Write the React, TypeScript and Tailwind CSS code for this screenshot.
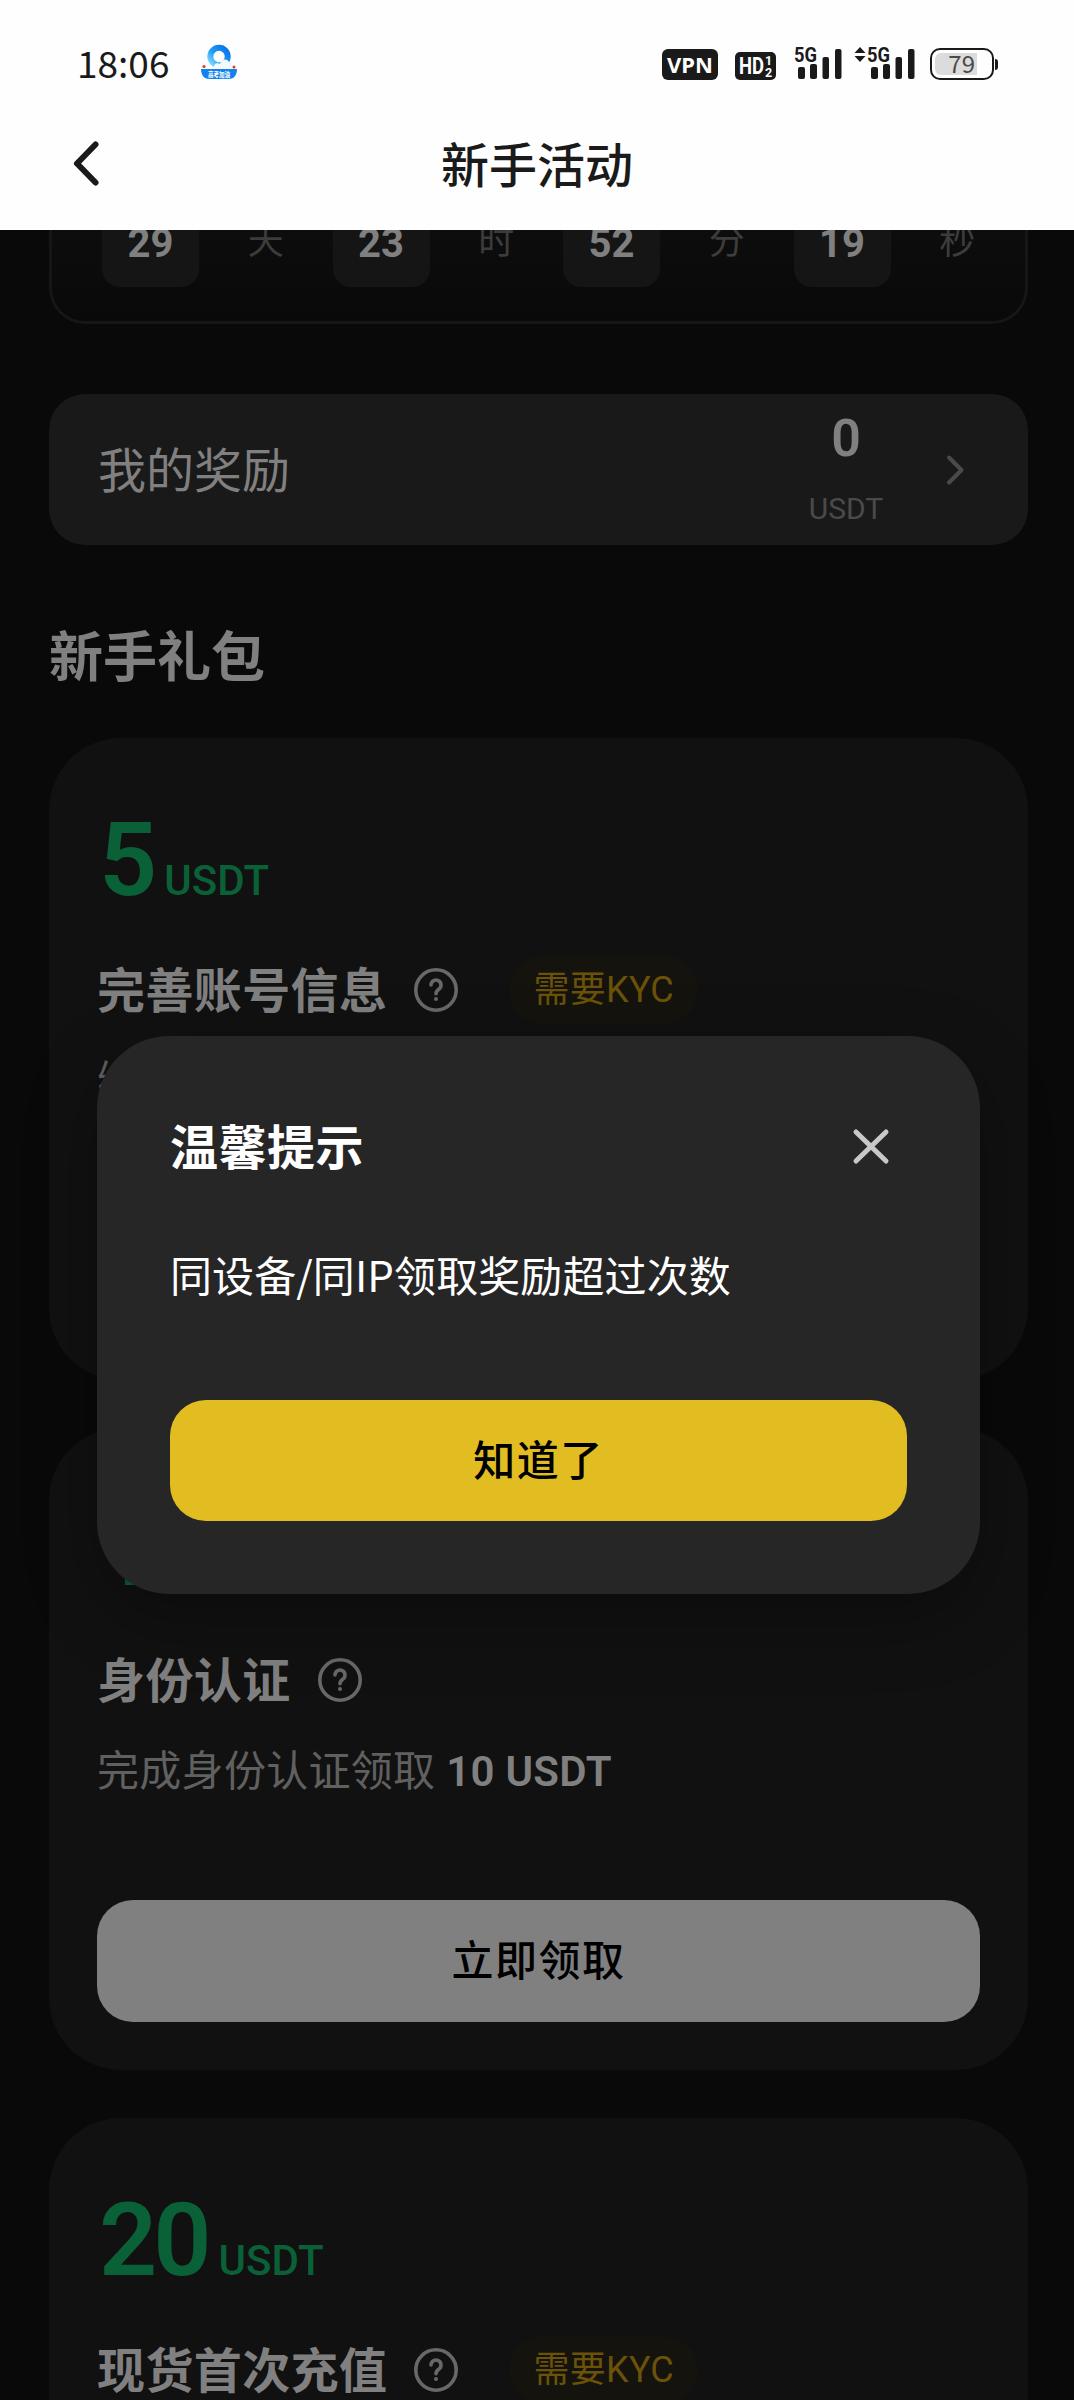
import { ReactNode } from "react";

type Gift = {
  amount: number;
  title: string;
  needKyc: boolean;
  desc: string;
  action: string;
};

const countdown = [
  { value: "29", unit: "天" },
  { value: "23", unit: "时" },
  { value: "52", unit: "分" },
  { value: "19", unit: "秒" },
];

const gifts: Gift[] = [
  { amount: 5, title: "完善账号信息", needKyc: true, desc: "绑定手机和邮箱领取", action: "立即领取" },
  { amount: 10, title: "身份认证", needKyc: false, desc: "完成身份认证领取", action: "立即领取" },
  { amount: 20, title: "现货首次充值", needKyc: true, desc: "完成首次充值领取", action: "立即领取" },
];

export default function App() {
  return (
    <div className="relative h-[2400px] w-[1074px] overflow-hidden bg-[#090909] font-['Roboto','Noto_Sans_CJK_SC',sans-serif] text-[#808080]">
      <header className="relative z-10 h-[230px] bg-[#fefefe] text-[#1a1a1a]">
        <StatusBar />
        <NavBar title="新手活动" />
      </header>

      <main className="-mt-6 pr-[46px] pl-[49px]">
        <Countdown />
        <RewardBar />
        <h2 className="mt-[75px] text-[54px] leading-[78px] font-bold">新手礼包</h2>
        <div className="mt-[40px] flex flex-col gap-12">
          {gifts.map((gift) => (
            <GiftCard key={gift.title} gift={gift} />
          ))}
        </div>
      </main>

      <TipDialog title="温馨提示" confirmText="知道了">
        同设备/同IP领取奖励超过次数
      </TipDialog>
    </div>
  );
}

function StatusBar() {
  return (
    <div className="flex h-[96px] items-end justify-between pr-[76px] pb-[16px] pl-[77px]">
      <div className="flex items-center">
        <span className="font-['Noto_Sans_CJK_SC',sans-serif] text-[37px] leading-[34px]">18:06</span>
        <BrowserLogo />
      </div>
      <div className="flex items-end">
        <span className="flex h-[31px] w-[56px] items-center justify-center rounded-md bg-[#1a1a1a] pb-[2px] font-['Noto_Sans',sans-serif] text-[22px] leading-none font-bold text-white">
          VPN
        </span>
        <HdBadge />
        <Signal className="ml-[18px]" />
        <svg className="mb-[18px] ml-[12px] h-[15px] w-[12px]" viewBox="0 0 12 15" fill="#1a1a1a">
          <path d="M6 0l5.5 6H.5zM6 15L.5 9h11z" />
        </svg>
        <Signal className="ml-px" />
        <Battery level={79} />
      </div>
    </div>
  );
}

function BrowserLogo() {
  return (
    <svg className="ml-[31px] h-[36px] w-[38px] overflow-visible" viewBox="0 0 38 36">
      <defs>
        <linearGradient id="ring" x1="0" y1="1" x2="1" y2="0">
          <stop offset="0" stopColor="#8fdcfb" />
          <stop offset="0.45" stopColor="#1f9cf5" />
          <stop offset="1" stopColor="#0b6fe8" />
        </linearGradient>
      </defs>
      <circle cx="19" cy="12.5" r="8.7" fill="none" stroke="url(#ring)" strokeWidth="6" />
      <path d="M14 25c-1-5 3-7 6-5 1-5 7-6 9-2 4-1 5 4 4 7z" fill="#f4f7fb" />
      <circle cx="4" cy="22.5" r="1.6" fill="#d8412f" />
      <circle cx="34" cy="23" r="1.5" fill="#d8412f" />
      <path d="M1 25h36c0 6-3 10-8 10H9c-5 0-8-4-8-10z" fill="#1383ec" />
      <text x="19" y="33.2" textAnchor="middle" fontSize="7" fontWeight="700" textLength="22" lengthAdjust="spacingAndGlyphs" fill="#fff" className="font-['Noto_Sans_CJK_SC',sans-serif]">
        高考加油
      </text>
    </svg>
  );
}

function HdBadge() {
  return (
    <svg className="ml-[17px] h-[28px] w-[41px] overflow-visible font-['Roboto',sans-serif]" viewBox="0 0 41 28" fontWeight="700">
      <rect width="41" height="28" rx="5" fill="#1a1a1a" />
      <text x="4" y="22" fontSize="23" textLength="25" lengthAdjust="spacingAndGlyphs" fill="#fff">HD</text>
      <text x="30" y="13" fontSize="12.5" fill="#fff">1</text>
      <text x="30" y="24.5" fontSize="12.5" fill="#fff">2</text>
    </svg>
  );
}

function Signal({ className = "" }: { className?: string }) {
  return (
    <svg className={`${className} h-[34px] w-[48px] overflow-visible`} viewBox="0 0 48 34" fill="#1a1a1a">
      <text x="0" y="16" fontSize="20" fontWeight="700" textLength="23" lengthAdjust="spacingAndGlyphs" className="font-['Roboto',sans-serif]">
        5G
      </text>
      <rect x="4" y="21" width="7" height="12" rx="2" />
      <rect x="16" y="18" width="7" height="15" rx="2" />
      <rect x="28.5" y="11" width="6.5" height="22" rx="2" />
      <rect x="41" y="3" width="6.5" height="30" rx="2" />
    </svg>
  );
}

function Battery({ level }: { level: number }) {
  return (
    <div className="ml-[15px] flex items-center">
      <div className="flex h-[32px] w-[64px] rounded-[10px] border-[2.5px] border-[#1a1a1a] p-[3px]">
        <div className="flex w-[42px] items-center justify-end rounded-l-md bg-[#dcdcdc] pr-[2px] pb-[2px]">
          <span className="font-['Noto_Sans_CJK_SC',sans-serif] text-[24px] leading-none text-[#4a4a4a]">{level}</span>
        </div>
      </div>
      <div className="ml-px h-[11px] w-[3px] rounded-r bg-[#1a1a1a]" />
    </div>
  );
}

function NavBar({ title }: { title: string }) {
  return (
    <div className="grid h-[134px] grid-cols-[120px_1fr_120px] items-center">
      <svg className="ml-[71px] h-[48px] w-[30px]" viewBox="0 0 30 48" fill="none" stroke="#1a1a1a" strokeWidth="6" strokeLinecap="round" strokeLinejoin="round">
        <path d="M24.5 5.5L6 24.5l18.5 19" />
      </svg>
      <h1 className="pt-[8px] text-center text-[48px] leading-none font-medium">{title}</h1>
    </div>
  );
}

function Countdown() {
  return (
    <section className="flex h-[118px] rounded-b-[36px] border-3 border-t-0 border-[#161616] bg-gradient-to-b from-[#0e0e0e] to-[#090909] pl-[50px]">
      {countdown.map((item) => (
        <div key={item.unit} className="flex w-[230.5px] shrink-0">
          <div className="h-[81px] w-[97px] rounded-b-[18px] bg-[#151515] pt-[14px] text-center text-[40px] leading-[47px] font-bold">
            {item.value}
          </div>
          <div className="flex-1 pt-[16px] text-center text-[36px] leading-[40px] text-[#3c3c3c]">{item.unit}</div>
        </div>
      ))}
    </section>
  );
}

function RewardBar() {
  return (
    <section className="mt-[70px] flex h-[151px] items-center rounded-[36px] bg-[#191919] pr-[60px] pl-[49px]">
      <span className="flex-1 pt-[5px] text-[48px] leading-none">我的奖励</span>
      <div className="flex w-[76px] flex-col items-center">
        <span className="text-[52px] leading-[60px] font-semibold">0</span>
        <span className="mt-[22px] mb-[4px] text-[30px] leading-[36px] text-[#4a4a4a]">USDT</span>
      </div>
      <svg className="ml-[60px] h-[32px] w-[24px]" viewBox="0 0 24 32" fill="none" stroke="#4a4a4a" strokeWidth="4" strokeLinecap="round" strokeLinejoin="round">
        <path d="M5 3.5L17.5 16 5 28.5" />
      </svg>
    </section>
  );
}

function GiftCard({ gift }: { gift: Gift }) {
  return (
    <article className="h-[642px] rounded-[72px] bg-[#111111] px-[48px] pt-[62px]">
      <div className="flex h-[120px] items-baseline pl-[2px] text-[#0a6037]">
        <span className="text-[102px] leading-[120px] font-semibold tracking-[-4px]">{gift.amount}</span>
        <span className="ml-[11px] text-[42px] leading-none font-medium">USDT</span>
      </div>
      <div className="mt-[36px] flex h-[68px] items-center">
        <h3 className="pt-[4px] text-[48px] leading-none font-bold tracking-[0.4px]">{gift.title}</h3>
        <HelpIcon />
        {gift.needKyc && (
          <span className="ml-[51px] flex h-[68px] items-center rounded-[34px] bg-[#14130d] px-6 text-[36px] leading-none tracking-[0.3px] text-[#6b5208]">
            需要KYC
          </span>
        )}
      </div>
      <p className="mt-[26px] text-[42px] leading-[64px] tracking-[0.3px] text-[#606060]">
        {gift.desc} <strong className="font-semibold text-[#808080]">{gift.amount} USDT</strong>
      </p>
      <button className="mt-[96px] h-[122px] w-full rounded-[36px] bg-[#808080] text-[42px] font-medium tracking-[1.5px] text-black">
        {gift.action}
      </button>
    </article>
  );
}

function HelpIcon() {
  return (
    <svg className="ml-[27px] h-[44px] w-[44px]" viewBox="0 0 44 44" fill="none" stroke="#686868" strokeLinecap="round">
      <circle cx="22" cy="22" r="20.2" strokeWidth="3.6" />
      <path d="M17 17a5 5 0 1 1 7.8 4.2c-1.8 1.3-2.8 2-2.8 4.6" strokeWidth="3.6" />
      <circle cx="22" cy="31" r="2" fill="#686868" stroke="none" />
    </svg>
  );
}

function TipDialog({ title, confirmText, children }: { title: string; confirmText: string; children: ReactNode }) {
  return (
    <div className="absolute top-[1036px] left-[97px] z-20 h-[558px] w-[883px] rounded-[72px] bg-[#262626] px-[73px] pt-[76px] font-['Noto_Sans_CJK_SC',sans-serif] text-white shadow-[0_24px_72px_rgba(0,0,0,0.3)]">
      <div className="flex h-[70px] items-center justify-between">
        <h2 className="pb-[7px] text-[48px] leading-none font-bold tracking-[0.5px]">{title}</h2>
        <svg className="mr-[16px] h-[40px] w-[40px]" viewBox="0 0 40 40" stroke="#c8c8c8" strokeWidth="5" strokeLinecap="round">
          <path d="M5 5l30 29M35 5L5 34" />
        </svg>
      </div>
      <p className="mt-[60px] text-[42px] leading-[64px] tracking-[0.1px]">{children}</p>
      <button className="mt-[94px] h-[121px] w-full rounded-[36px] bg-[#e1bd22] pb-[6px] text-[42px] font-medium tracking-[1.5px] text-black">
        {confirmText}
      </button>
    </div>
  );
}
